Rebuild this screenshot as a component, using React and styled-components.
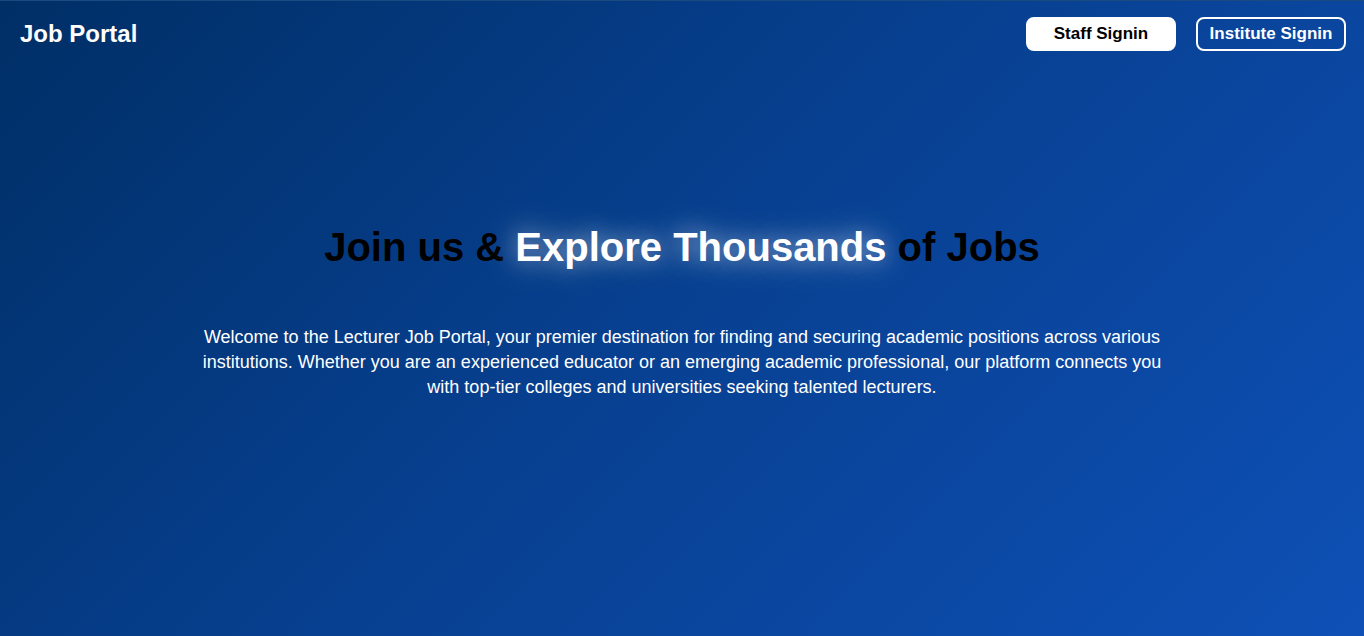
import React from 'react';
import styled, { createGlobalStyle } from 'styled-components';

const Global = createGlobalStyle`
  html, body {
    margin: 0;
    padding: 0;
  }
  body {
    font-family: "Liberation Sans", Arial, sans-serif;
  }
`;

const Page = styled.div`
  min-height: 636px;
  background: linear-gradient(135deg, #002f66 0%, #073f8e 45%, #0e50b6 100%);
  color: #fff;
  display: flex;
  flex-direction: column;
  border-top: 1px solid #1a4b80;
  box-sizing: border-box;
`;

const Navbar = styled.header`
  display: flex;
  align-items: center;
  justify-content: space-between;
  padding: 16px 18px 0 20px;
  height: 34px;
`;

const Brand = styled.h1`
  margin: 0;
  font-size: 24px;
  font-weight: 700;
  color: #fff;
`;

const Actions = styled.nav`
  display: flex;
  gap: 20px;
`;

const Button = styled.button`
  width: 150px;
  height: 34px;
  padding: 0;
  border-radius: 8px;
  font-family: inherit;
  font-size: 17px;
  font-weight: 700;
  cursor: pointer;
  box-sizing: border-box;
  background: ${p => (p.$outline ? 'transparent' : '#fff')};
  color: ${p => (p.$outline ? '#fff' : '#000')};
  border: 2px solid #fff;
`;

const Hero = styled.main`
  display: flex;
  flex-direction: column;
  align-items: center;
  padding-top: 174px;
`;

const Title = styled.h2`
  margin: 0;
  font-size: 40px;
  font-weight: 700;
  color: #000;
  text-align: center;
`;

const Glow = styled.span`
  color: #fff;
  text-shadow: 0 0 22px rgba(255, 255, 255, 0.5), 0 0 44px rgba(255, 255, 255, 0.35);
`;

const Lead = styled.p`
  margin: 55px 0 0;
  max-width: 966px;
  font-size: 18px;
  line-height: 25px;
  text-align: center;
  color: #fff;
`;

export default function App() {
  return (
    <>
      <Global />
      <Page>
        <Navbar>
          <Brand>Job Portal</Brand>
          <Actions>
            <Button>Staff Signin</Button>
            <Button $outline>Institute Signin</Button>
          </Actions>
        </Navbar>
        <Hero>
          <Title>
            Join us &amp; <Glow>Explore Thousands</Glow> of Jobs
          </Title>
          <Lead>
            Welcome to the Lecturer Job Portal, your premier destination for finding and securing academic
            positions across various institutions. Whether you are an experienced educator or an emerging
            academic professional, our platform connects you with top-tier colleges and universities seeking
            talented lecturers.
          </Lead>
        </Hero>
      </Page>
    </>
  );
}
